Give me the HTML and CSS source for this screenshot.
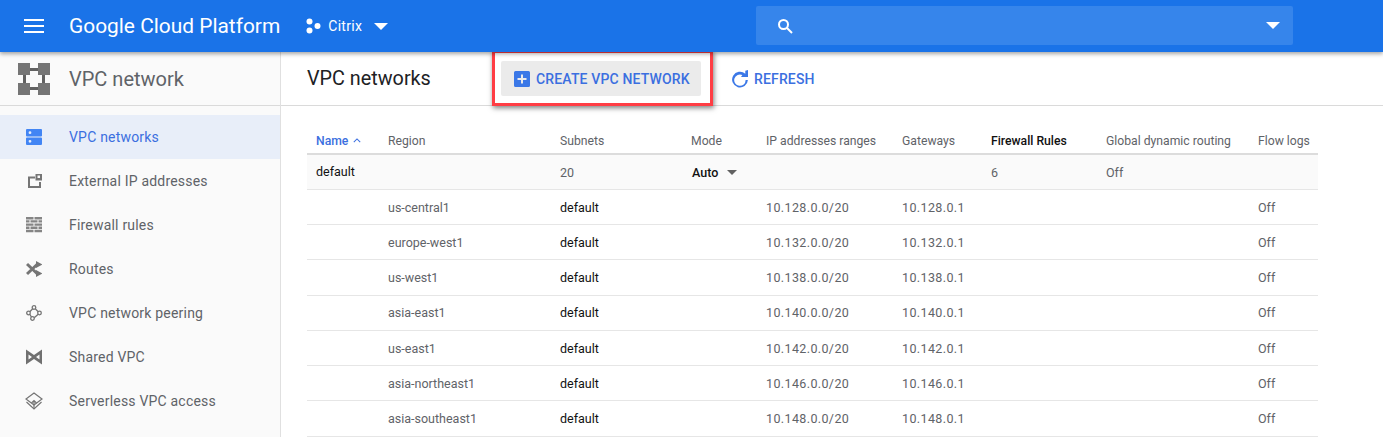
FILE: index.html
```html
<!DOCTYPE html>
<html>
<head>
  <meta charset="utf-8">
  <title>VPC networks</title>
  <link rel="stylesheet" href="styles.css">
</head>
<body>
  <header class="topbar">
    <svg class="menu-icon" viewBox="0 0 20 14" width="20" height="14"><path d="M0 0h20v2H0zM0 6h20v2H0zM0 12h20v2H0z" fill="#fff"/></svg>
    <span class="brand">Google Cloud Platform</span>
    <div class="project">
      <svg viewBox="0 0 16 16" width="16" height="16"><circle cx="4.500" cy="3.500" r="3" fill="#fff"/><circle cx="12.500" cy="8" r="3" fill="#fff"/><circle cx="4.500" cy="12.500" r="3" fill="#fff"/></svg>
      <span>Citrix</span>
      <i class="caret"></i>
    </div>
    <div class="search">
      <svg viewBox="0 0 16 16" width="16" height="16"><circle cx="6.500" cy="6.500" r="4.500" fill="none" stroke="#fff" stroke-width="2"/><path d="M10 10l5 5" stroke="#fff" stroke-width="2"/></svg>
      <i class="caret"></i>
    </div>
  </header>

  <div class="layout">
    <aside class="sidebar">
      <div class="side-head">
        <svg viewBox="0 0 32 32" width="32" height="32">
          <path d="M8 5h16v3H8zM8 24h16v3H8zM5 8h3v16H5zM24 8h3v16h-3z" fill="#616161"/>
          <path d="M0 0h12v12H0zM20 0h12v12H20zM0 20h12v12H0zM20 20h12v12H20z" fill="#757575"/>
        </svg>
        <span>VPC network</span>
      </div>
      <nav>
        <a class="nav-item active">
          <svg viewBox="0 0 16 16" width="16" height="16"><path fill-rule="evenodd" d="M1 0h14a1 1 0 0 1 1 1v5.500a1 1 0 0 1-1 1H1a1 1 0 0 1-1-1V1a1 1 0 0 1 1-1zM4 2.300a1.400 1.400 0 1 0 0 2.800a1.400 1.400 0 0 0 0-2.800zM1 8.500h14a1 1 0 0 1 1 1V15a1 1 0 0 1-1 1H1a1 1 0 0 1-1-1V9.500a1 1 0 0 1 1-1zM4 10.900a1.400 1.400 0 1 0 0 2.800a1.400 1.400 0 0 0 0-2.800z" fill="#4285f4"/></svg>
          <span>VPC networks</span>
        </a>
        <a class="nav-item">
          <svg viewBox="0 0 16 16" width="16" height="16"><path d="M2 3.500h7v2H4v7.500h9V9h2v6H2z" fill="#757575"/><path fill-rule="evenodd" d="M9.500 1H16v6.500H9.500zM11.500 2.500v2.500H14V2.500z" fill="#757575"/></svg>
          <span>External IP addresses</span>
        </a>
        <a class="nav-item">
          <svg viewBox="0 0 16 16" width="16" height="16"><path d="M0 0h7.500v2.400H0zM8.500 0H16v2.400H8.500zM0 3.200h3.500v2.400H0zM4.500 3.200h7v2.400h-7zM12.500 3.200H16v2.400h-3.500zM0 6.400h7.500v2.400H0zM8.500 6.400H16v2.400H8.500zM0 9.600h3.500V12H0zM4.500 9.600h7V12h-7zM12.500 9.600H16V12h-3.500zM0 12.800h7.500v2.400H0zM8.500 12.800H16v2.400H8.500z" fill="#858585"/></svg>
          <span>Firewall rules</span>
        </a>
        <a class="nav-item">
          <svg viewBox="0 0 16 16" width="16" height="16"><path d="M1 3l10 9.500M1 13L11 3.500" fill="none" stroke="#757575" stroke-width="3"/><path d="M10 0l6.500 3.500L10 7zM10 9l6.500 3.500L10 16z" fill="#757575"/></svg>
          <span>Routes</span>
        </a>
        <a class="nav-item">
          <svg viewBox="0 0 16 16" width="16" height="16" fill="none" stroke="#757575" stroke-width="1.300"><circle cx="8" cy="2.500" r="1.800"/><circle cx="2.500" cy="8" r="1.800"/><circle cx="13.500" cy="8" r="1.800"/><circle cx="6.500" cy="13.500" r="1.800"/><path d="M6.700 3.800L3.800 6.700M9.300 3.800l2.900 2.900M3.800 9.300l1.700 2.700M12.200 9.300l-4 3.500"/></svg>
          <span>VPC network peering</span>
        </a>
        <a class="nav-item">
          <svg viewBox="0 0 16 16" width="16" height="16"><path fill-rule="evenodd" d="M0 .5l8 5.500 8-5.500v15L8 10l-8 5.500zM2.500 5.500v5L6 8zM13.500 5.500L10 8l3.500 2.500z" fill="#707070"/></svg>
          <span>Shared VPC</span>
        </a>
        <a class="nav-item wide-icon">
          <svg viewBox="0 0 18 18" width="18" height="18" fill="none" stroke="#757575" stroke-width="1.200"><path d="M9 1l8 6-8 6-8-6z"/><path d="M1.500 10L9 17l7.500-7"/><path d="M9 16V8.500M6.500 11L9 8.500 11.500 11"/></svg>
          <span>Serverless VPC access</span>
        </a>
      </nav>
    </aside>

    <main class="content">
      <div class="toolbar">
        <h1>VPC networks</h1>
        <button class="btn btn-create">
          <svg viewBox="0 0 16 16" width="16" height="16"><path fill-rule="evenodd" d="M1.500 0h13A1.500 1.500 0 0 1 16 1.500v13a1.500 1.500 0 0 1-1.500 1.500h-13A1.500 1.500 0 0 1 0 14.500v-13A1.500 1.500 0 0 1 1.500 0zM7 3.500V7H3.500v2H7v3.500h2V9h3.500V7H9V3.500z" fill="#3b78e7"/></svg>
          CREATE VPC NETWORK
        </button>
        <button class="btn btn-refresh">
          <svg viewBox="0 0 18 18" width="18" height="18"><path d="M14.300 3.700V.8L17 0v7h-7l1.400-2A5.700 5.700 0 1 0 14.600 10h2.300A7.900 7.900 0 1 1 14.300 3.700z" fill="#3b78e7"/></svg>
          REFRESH
        </button>
      </div>

      <table class="networks">
        <colgroup>
          <col class="c-name"><col class="c-region"><col class="c-subnets"><col class="c-mode"><col class="c-ip"><col class="c-gw"><col class="c-fw"><col class="c-dyn"><col class="c-logs">
        </colgroup>
        <thead>
          <tr>
            <th class="sorted">Name <svg viewBox="0 0 10 6" width="8" height="5"><path d="M1 5l4-4 4 4" fill="none" stroke="#3b6fe0" stroke-width="1.300"/></svg></th>
            <th>Region</th>
            <th>Subnets</th>
            <th>Mode</th>
            <th>IP addresses ranges</th>
            <th>Gateways</th>
            <th class="dark">Firewall Rules</th>
            <th>Global dynamic routing</th>
            <th>Flow logs</th>
          </tr>
        </thead>
        <tbody>
          <tr class="group">
            <td class="dark up">default</td><td></td><td>20</td>
            <td class="mode"><b>Auto</b><i class="caret small"></i></td>
            <td></td><td></td><td>6</td><td>Off</td><td></td>
          </tr>
          <tr><td></td><td>us-central1</td><td class="dark">default</td><td></td><td class="addr">10.128.0.0/20</td><td class="addr">10.128.0.1</td><td></td><td></td><td>Off</td></tr>
          <tr><td></td><td>europe-west1</td><td class="dark">default</td><td></td><td class="addr">10.132.0.0/20</td><td class="addr">10.132.0.1</td><td></td><td></td><td>Off</td></tr>
          <tr><td></td><td>us-west1</td><td class="dark">default</td><td></td><td class="addr">10.138.0.0/20</td><td class="addr">10.138.0.1</td><td></td><td></td><td>Off</td></tr>
          <tr><td></td><td>asia-east1</td><td class="dark">default</td><td></td><td class="addr">10.140.0.0/20</td><td class="addr">10.140.0.1</td><td></td><td></td><td>Off</td></tr>
          <tr><td></td><td>us-east1</td><td class="dark">default</td><td></td><td class="addr">10.142.0.0/20</td><td class="addr">10.142.0.1</td><td></td><td></td><td>Off</td></tr>
          <tr><td></td><td>asia-northeast1</td><td class="dark">default</td><td></td><td class="addr">10.146.0.0/20</td><td class="addr">10.146.0.1</td><td></td><td></td><td>Off</td></tr>
          <tr><td></td><td>asia-southeast1</td><td class="dark">default</td><td></td><td class="addr">10.148.0.0/20</td><td class="addr">10.148.0.1</td><td></td><td></td><td>Off</td></tr>
        </tbody>
      </table>

      <div class="callout"></div>
    </main>
  </div>
</body>
</html>
```

FILE: styles.css
```css
html, body {
  margin: 0;
  height: 100%;
  overflow: hidden;
}

body {
  font-family: Roboto, "Liberation Sans", sans-serif;
  color: #5f6368;
  background: #fff;
}

.caret {
  display: inline-block;
  border-left: 7px solid transparent;
  border-right: 7px solid transparent;
  border-top: 7px solid #fff;
}

/* top blue bar */
.topbar {
  position: relative;
  z-index: 2;
  display: flex;
  align-items: center;
  height: 52px;
  padding-left: 24px;
  background: #1a73e8;
  box-shadow: 0 2px 4px rgba(0, 0, 0, .35);
  color: #fff;
  box-sizing: border-box;
}

.brand {
  margin-left: 25px;
  font-size: 20.900px;
  white-space: nowrap;
}

.project {
  display: flex;
  align-items: center;
  margin-left: 25px;
  font-size: 14px;
  letter-spacing: .3px;
}

.project span {
  margin-left: 7px;
}

.project .caret {
  margin-left: 12px;
}

.search {
  display: flex;
  align-items: center;
  justify-content: space-between;
  width: 537px;
  height: 39px;
  margin-left: 368px;
  margin-top: -1px;
  padding: 0 13px 0 21px;
  box-sizing: border-box;
  background: #3685eb;
  border-radius: 2px;
}

/* page body */
.layout {
  display: flex;
  height: 385px;
}

.sidebar {
  flex: none;
  width: 281px;
  box-sizing: border-box;
  background: #fafafa;
  border-right: 1px solid #e0e0e0;
}

.side-head {
  display: flex;
  align-items: center;
  height: 54px;
  box-sizing: border-box;
  padding-left: 18px;
  border-bottom: 1px solid #dadada;
  font-size: 20px;
}

.side-head span {
  margin-left: 19px;
}

.sidebar nav {
  padding-top: 9px;
}

.nav-item {
  display: flex;
  align-items: center;
  height: 44px;
  font-size: 14px;
  letter-spacing: .2px;
}

.nav-item svg {
  flex: none;
  margin-left: 26px;
  margin-right: 27px;
}

.nav-item.wide-icon svg {
  margin-left: 25px;
  margin-right: 26px;
}

.nav-item.active {
  background: #e8eef9;
  color: #3b6fe0;
}

.content {
  position: relative;
  flex: 1;
  min-width: 0;
}

.toolbar {
  display: flex;
  align-items: center;
  height: 54px;
  box-sizing: border-box;
  padding-left: 26px;
  border-bottom: 1px solid #dadada;
}

.toolbar h1 {
  width: 194px;
  flex: none;
  margin: 0;
  font-size: 19.800px;
  font-weight: 400;
  color: #202124;
}

.btn {
  display: flex;
  align-items: center;
  height: 35px;
  border: 0;
  border-radius: 2px;
  background: none;
  font-family: inherit;
  font-size: 14px;
  font-weight: 500;
  letter-spacing: .15px;
  color: #3b6fe0;
  white-space: nowrap;
}

.btn svg {
  margin-right: 6px;
}

.btn-create {
  width: 200px;
  padding: 0 0 0 13px;
  background: #ebebeb;
}

.btn-refresh {
  margin-left: 30px;
  padding: 0;
}

.btn-refresh svg {
  margin-right: 5px;
}

/* the red box drawn over the create button */
.callout {
  position: absolute;
  left: 211px;
  top: -2px;
  width: 221px;
  height: 56px;
  box-sizing: border-box;
  border: 3px solid #ff3d44;
  box-shadow: 1px 2px 5px rgba(0, 0, 0, .5);
}

.networks {
  margin: 22px 0 0 26px;
  width: 1011px;
  table-layout: fixed;
  border-collapse: collapse;
  font-size: 12.500px;
}

.c-name { width: 72px; }
.c-region { width: 172px; }
.c-subnets { width: 131px; }
.c-mode { width: 75px; }
.c-ip { width: 136px; }
.c-gw { width: 89px; }
.c-fw { width: 115px; }
.c-dyn { width: 152px; }

.networks th {
  height: 25.400px;
  padding: 0 0 0 9px;
  font-size: 12.200px;
  font-weight: 400;
  text-align: left;
  white-space: nowrap;
  border-bottom: 2px solid #dcdcdc;
}

.networks td {
  height: 35.250px;
  box-sizing: border-box;
  padding: 0 0 0 9px;
  white-space: nowrap;
  border-bottom: 1px solid #e6e6e6;
}

.networks td.addr {
  letter-spacing: .38px;
}

.networks th.sorted {
  color: #3b6fe0;
  font-weight: 500;
}

.networks th.sorted svg {
  margin-left: 2px;
  vertical-align: 2px;
}

.networks .dark {
  color: #111;
}

.networks th.dark {
  font-weight: 500;
}

.networks .up {
  padding-bottom: 2px;
}

.group td {
  height: 35px;
  background: #fafafa;
}

.mode b {
  margin-left: 1px;
  font-weight: 500;
  color: #111;
}

.caret.small {
  margin-left: 9px;
  vertical-align: 2px;
  border-left-width: 5px;
  border-right-width: 5px;
  border-top: 5px solid #616161;
}
```
